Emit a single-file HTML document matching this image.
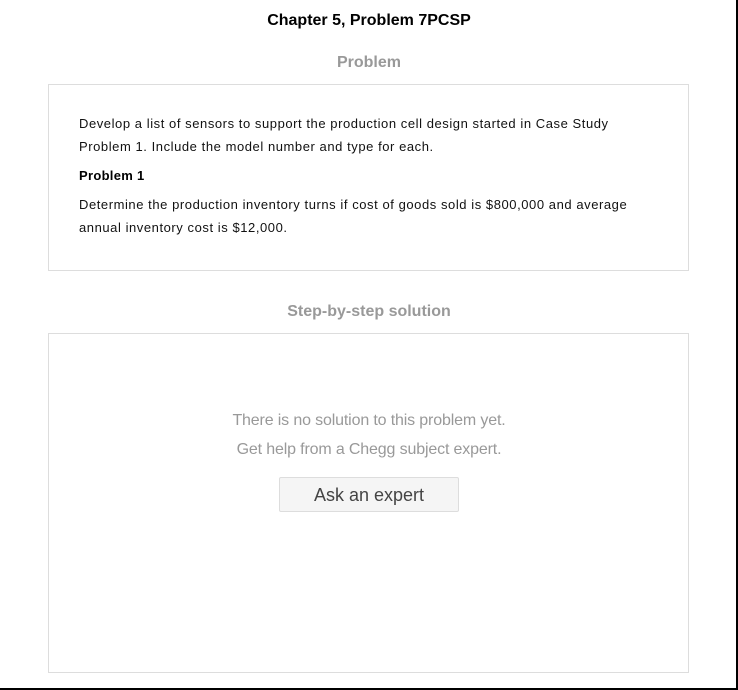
<!DOCTYPE html>
<html><head><style>
body{margin:0;width:738px;height:690px;background:#fff;font-family:"Liberation Sans",Arial,sans-serif;position:relative;overflow:hidden}
.frame{position:absolute;left:0;top:0;width:736px;height:688px;border-right:2px solid #000;border-bottom:2px solid #000}
.t{position:absolute;left:0;width:738px;text-align:center}
.box{position:absolute;left:48px;width:639px;border:1px solid #ddd;box-sizing:content-box}
.p{position:absolute;left:79px;font-size:13px;color:#111;line-height:23px;white-space:nowrap;letter-spacing:0.56px}
</style></head><body>
<div class="frame"></div>
<div class="t" style="top:12px;font-size:16px;font-weight:bold;color:#000">Chapter 5, Problem 7PCSP</div>
<div class="t" style="top:54px;font-size:16px;font-weight:bold;color:#999">Problem</div>
<div class="box" style="top:84px;height:185px"></div>
<div class="p" style="top:112px">Develop a list of sensors to support the production cell design started in Case Study<br>Problem 1. Include the model number and type for each.</div>
<div class="p" style="top:164px;font-weight:bold;color:#000;letter-spacing:0.3px">Problem 1</div>
<div class="p" style="top:193px">Determine the production inventory turns if cost of goods sold is $800,000 and average<br>annual inventory cost is $12,000.</div>
<div class="t" style="top:303px;font-size:16px;font-weight:bold;color:#999">Step-by-step solution</div>
<div class="box" style="top:333px;height:338px"></div>
<div class="t" style="top:412px;font-size:16px;color:#999;letter-spacing:-0.15px">There is no solution to this problem yet.</div>
<div class="t" style="top:441px;font-size:16px;color:#999;letter-spacing:-0.15px">Get help from a Chegg subject expert.</div>
<div style="position:absolute;left:279px;top:477px;width:178px;height:33px;background:#f5f5f5;border:1px solid #ddd;border-radius:2px;text-align:center;line-height:35px;font-size:18px;color:#444">Ask an expert</div>
</body></html>
